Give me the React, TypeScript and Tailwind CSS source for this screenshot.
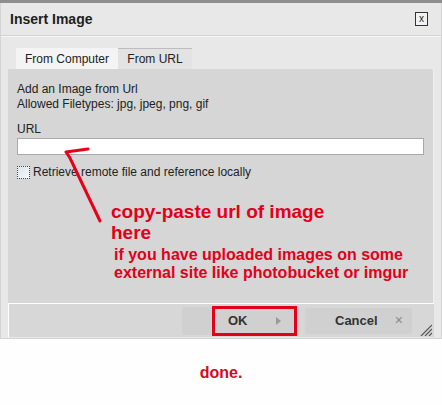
export default function App() {
  return (
    <div className="relative w-[442px] h-[405px] overflow-hidden bg-[#fefefe] font-['Liberation_Sans',Arial,sans-serif] text-[#222]">
      <div className="h-[3px] bg-[#8e8e8e]" />

      {/* dialog */}
      <div className="h-[336px] bg-[#e8e8e8] border-x border-b border-[#d4d4d4] flex flex-col">
        <div className="h-[33px] shrink-0 flex items-center justify-between pl-[9px] pr-[13px] border-b border-[#d3d3d3] shadow-[0_1px_0_#f6f6f6]">
          <span className="text-[14px] font-bold text-[#1e1e1e]">Insert Image</span>
          <button className="w-[13px] h-[14px] border border-[#333] bg-[#f2f2f2] flex items-center justify-center text-[10px] leading-none text-[#222]">
            x
          </button>
        </div>

        <div className="flex-1 flex flex-col px-[7px] pt-[12px]">
          <div className="flex h-[21px] pl-[8px] text-[12px]">
            <div className="w-[102px] bg-[#f4f4f4] flex items-center justify-center">From Computer</div>
            <div className="w-[74px] bg-[#e3e3e3] border-t border-[#bdbdbd] flex items-center justify-center">From URL</div>
          </div>

          <div className="h-[234px] bg-[#d6d6d6] rounded-tr-[3px] border-r border-[#f0f0f0] pl-[9px] pr-[9px] pt-[13px] text-[12px] leading-[15px] text-[#222]">
            <div>Add an Image from Url</div>
            <div>Allowed Filetypes: jpg, jpeg, png, gif</div>
            <div className="mt-[10px]">URL</div>
            <div className="mt-[1px] h-[17px] bg-white border border-[#a9a9a9]" />
            <div className="mt-[10px] flex items-center gap-[3px]">
              <div className="w-[13px] h-[13px] border border-dotted border-[#3a4a5a] bg-gradient-to-br from-[#dfe6ec] to-[#f6f8fa]" />
              <span>Retrieve remote file and reference locally</span>
            </div>

            <div className="mt-[21px] ml-[94px] font-bold text-[#e2001a]">
              <div className="text-[19px] leading-[21px]">
                copy-paste url of image
                <br />
                here
              </div>
              <div className="mt-[3px] ml-[3px] text-[16px] leading-[18px]">
                if you have uploaded images on some
                <br />
                external site like photobucket or imgur
              </div>
            </div>
          </div>

          <div className="h-[34px] bg-[#d7d7d7] border-t border-white border-l flex items-center pl-[173px] pr-[2px] text-[13px] font-bold text-[#333]">
            <div className="h-[28px] w-[118px] rounded-[3px] bg-[#d0d0d0] flex items-center">
              <div className="ml-[30px] h-[30px] w-[85px] border-[3px] border-[#e2001a] flex items-center justify-between pl-[13px] pr-[13px]">
                <span>OK</span>
                <svg width="5" height="8" viewBox="0 0 5 8">
                  <path d="M0 0 L5 4 L0 8 Z" fill="#9a9a9a" />
                </svg>
              </div>
            </div>
            <div className="ml-[5px] h-[26px] w-[107px] rounded-[3px] bg-[#d0d0d0] flex items-center pl-[30px] gap-[17px]">
              <span>Cancel</span>
              <span className="text-[#8a8a8a] font-normal text-[14px]">×</span>
            </div>
            <svg className="ml-auto self-end mb-[1px]" width="12" height="12" viewBox="0 0 12 12">
              <path d="M12 1 L1 12 M12 5 L5 12 M12 9 L9 12" stroke="#555" strokeWidth="1.2" />
            </svg>
          </div>
        </div>
      </div>

      <div className="pt-[22px] text-center text-[16px] font-bold text-[#d50a1e]">done.</div>

      {/* hand-drawn arrow annotation */}
      <svg className="absolute left-0 top-0 pointer-events-none" width="442" height="405">
        <path d="M100 221 L70 158 L66 152 M66 152 L88 149" stroke="#e8001a" strokeWidth="3" fill="none" strokeLinecap="round" />
      </svg>
    </div>
  );
}
